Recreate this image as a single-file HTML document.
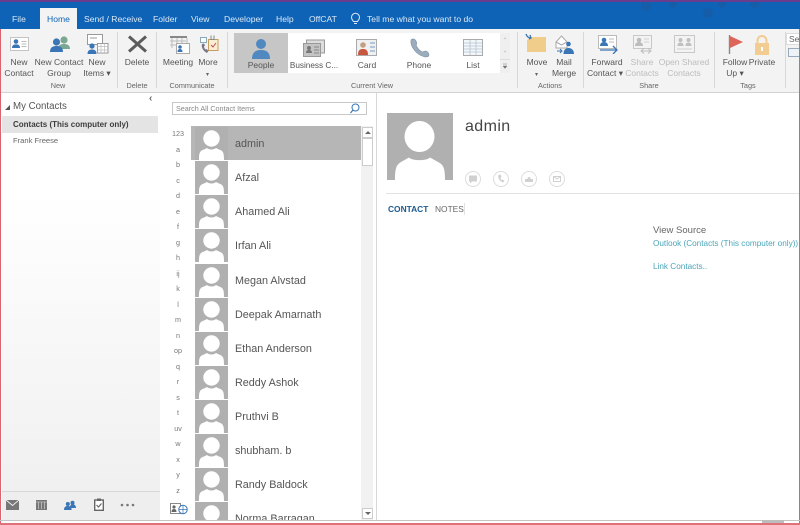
<!DOCTYPE html>
<html><head><meta charset="utf-8">
<style>
html,body{margin:0;padding:0;background:#fff}
#p{position:relative;width:800px;height:525px;overflow:hidden;background:#fff;font-family:"Liberation Sans",sans-serif;color:#555}
#p div,#p svg{position:absolute}
.t{white-space:nowrap;line-height:11px}
.c{white-space:nowrap;line-height:11px;text-align:center;font-size:8.5px;color:#555;transform:translateX(-50%)}
.g{white-space:nowrap;line-height:10px;font-size:7.3px;color:#666;transform:translateX(-50%)}
.tab{white-space:nowrap;font-size:8.6px;color:#dce9f6;line-height:12px;top:13px}
.sep{width:1px;background:#d8d8d8;top:32px;height:56px}
.l{font-size:7.2px;color:#777;line-height:9px;width:20px;text-align:center;left:168px}
.n{left:235px;font-size:10.8px;color:#555;line-height:14px;white-space:nowrap}
.av{left:195px;width:33px;height:33px}
</style></head><body>
<div id="p">
<svg width="0" height="0" style="position:absolute"><defs>
<symbol id="a" viewBox="0 0 33 33"><rect width="33" height="33" fill="#b0b0b0"/><path d="M4 33C4 26 4.500 24 9 22.500L12 21C14 23 19 23 21 21L24 22.500C28.500 24 29 26 29 33Z" fill="#fff"/><ellipse cx="16.500" cy="11.500" rx="8.200" ry="8.200" fill="#fff"/></symbol>
</defs></svg>

<!-- title bar -->
<div style="left:0;top:0;width:800px;height:29px;background:#0f63b6"></div>
<div style="left:0;top:0;width:800px;height:2px;background:#6a3d8f"></div>
<svg style="left:630px;top:2px" width="170" height="16" viewBox="0 0 170 16"><g fill="#155da9"><circle cx="16" cy="4" r="5"/><circle cx="43" cy="2" r="4"/><circle cx="78" cy="11" r="5"/><circle cx="92" cy="2" r="4"/><circle cx="125" cy="1" r="5"/></g></svg>
<div style="left:40px;top:8px;width:37px;height:21px;background:#f3f3f3"></div>
<div class="tab" style="left:12px">File</div>
<div class="tab" style="left:47px;color:#0f63b6">Home</div>
<div class="tab" style="left:84px">Send / Receive</div>
<div class="tab" style="left:153px">Folder</div>
<div class="tab" style="left:191px">View</div>
<div class="tab" style="left:224px">Developer</div>
<div class="tab" style="left:276px">Help</div>
<div class="tab" style="left:309px">OffCAT</div>
<div class="tab" style="left:367px">Tell me what you want to do</div>
<svg style="left:350px;top:12px" width="11" height="14" viewBox="0 0 11 14"><path d="M3.500 9.500C2.500 8.300 1.500 7.300 1.500 5.300a4 4 0 0 1 8 0c0 2-1 3-2 4.200ZM4 11.500h3" fill="none" stroke="#dce9f6" stroke-width="1"/></svg>

<!-- ribbon -->
<div style="left:0;top:29px;width:800px;height:63px;background:#f3f3f3"></div>
<div style="left:0;top:92px;width:800px;height:1px;background:#d2d2d2"></div>
<div class="sep" style="left:117px"></div>
<div class="sep" style="left:156px"></div>
<div class="sep" style="left:227px"></div>
<div class="sep" style="left:517px"></div>
<div class="sep" style="left:583px"></div>
<div class="sep" style="left:714px"></div>
<div class="sep" style="left:785px"></div>

<!-- New Contact -->
<svg style="left:10px;top:37px" width="19" height="14" viewBox="0 0 19 14"><rect x=".5" y=".5" width="18" height="13" fill="#fff" stroke="#c4c4c4"/><circle cx="6" cy="4.500" r="2.300" fill="#3a76b5"/><path d="M2 11c0-3 2-3.600 4-3.600s4 .6 4 3.600Z" fill="#3a76b5"/><path d="M11.500 4.500h5M11.500 7h5M11.500 9.500h5" stroke="#bbb"/></svg>
<div class="c" style="left:19px;top:57px">New<br>Contact</div>
<!-- New Contact Group -->
<svg style="left:49px;top:35px" width="22" height="18" viewBox="0 0 22 18"><circle cx="15" cy="5" r="3.600" fill="#7aa892"/><path d="M9 14c0-4 3-5 6-5s6 1 6 5Z" fill="#7aa892"/><circle cx="7.500" cy="7" r="3.600" fill="#3a76b5"/><path d="M1 17c0-5 3-6 6.500-6s6.500 1 6.500 6Z" fill="#3a76b5"/></svg>
<div class="c" style="left:59px;top:57px">New Contact<br>Group</div>
<!-- New Items -->
<svg style="left:87px;top:34px" width="22" height="20" viewBox="0 0 22 20"><rect x=".5" y=".5" width="15" height="10" fill="#fff" stroke="#999"/><path d="M3 4h7" stroke="#999"/><rect x="10.500" y="9.500" width="10.500" height="9.500" fill="#fff" stroke="#999"/><path d="M10.500 12.500h10.500M10.500 16h10.500M14 9.500v9.500M17.500 9.500v9.500" stroke="#bbb" stroke-width=".7"/><circle cx="5" cy="12" r="2.600" fill="#3a76b5"/><path d="M.5 20c0-3.500 2-4.500 4.500-4.500s4.500 1 4.500 4.500Z" fill="#3a76b5"/></svg>
<div class="c" style="left:97px;top:57px">New<br>Items &#9662;</div>
<div class="g" style="left:58px;top:81px">New</div>
<!-- Delete -->
<svg style="left:127px;top:35px" width="21" height="18" viewBox="0 0 21 18"><path d="M2 1.500L19 16.500M19 1.500L2 16.500" stroke="#5c5c5c" stroke-width="3"/></svg>
<div class="c" style="left:137px;top:57px">Delete</div>
<div class="g" style="left:137px;top:81px">Delete</div>
<!-- Meeting -->
<svg style="left:169px;top:35px" width="21" height="20" viewBox="0 0 21 20"><path d="M1 1h17v2H1Z" fill="#888"/><path d="M1 6h16M1 10h8M3 3v10M8 3v10M13 3v5M18 3v5" stroke="#bbb"/><rect x="7.500" y="8.500" width="13" height="10" fill="#fff" stroke="#aaa"/><circle cx="11" cy="12" r="1.800" fill="#3a76b5"/><path d="M8.500 17c0-2 1-3 2.500-3s2.500 1 2.500 3Z" fill="#3a76b5"/></svg>
<div class="c" style="left:178px;top:57px">Meeting</div>
<!-- More -->
<svg style="left:199px;top:34px" width="21" height="21" viewBox="0 0 21 21"><rect x="9.500" y="5.500" width="9.500" height="11" fill="#fbeed5" stroke="#c89c5a"/><path d="M12 1.500v4h3v-4" fill="none" stroke="#888"/><path d="M12 11l2 2 3-4" stroke="#c0504d" fill="none"/><rect x="1.500" y="3.500" width="6" height="5" fill="#fff" stroke="#8ab"/><path d="M3 10c-1 3 1 7 5 9l1.500-2-2-2-1 .5c-1-1-1.500-2-1.500-3l1-1-1-2Z" fill="#778"/></svg>
<div class="c" style="left:208px;top:57px">More</div>
<div style="left:206px;top:72px;font-size:6px;line-height:6px;color:#666">&#9662;</div>
<div class="g" style="left:192px;top:81px">Communicate</div>

<!-- gallery -->
<div style="left:234px;top:33px;width:275px;height:40px;background:#fff"></div>
<div style="left:234px;top:33px;width:54px;height:40px;background:#c6c6c6"></div>
<div style="left:500px;top:33px;width:10px;height:40px;background:#efefef"></div>
<svg style="left:251px;top:38px" width="20" height="22" viewBox="0 0 20 22"><circle cx="10" cy="6" r="5" fill="#5088c0"/><path d="M1 21c0-7 4-9 9-9s9 2 9 9Z" fill="#5088c0"/></svg>
<div class="c" style="left:261px;top:60px">People</div>
<svg style="left:303px;top:39px" width="22" height="18" viewBox="0 0 22 18"><rect x="3.500" y="1" width="18" height="13" fill="#ddd" stroke="#999"/><rect x=".5" y="4.500" width="17" height="13" fill="#c4c4c4" stroke="#999"/><circle cx="6" cy="9" r="2" fill="#777"/><path d="M3 14c0-2 1-3 3-3s3 1 3 3Z" fill="#777"/><path d="M11 8h5M11 11h5M11 14h5" stroke="#888"/></svg>
<div class="c" style="left:314px;top:60px;font-size:8.200px">Business C...</div>
<svg style="left:356px;top:39px" width="21" height="17" viewBox="0 0 21 17"><rect x=".5" y=".5" width="20" height="16" fill="#f0f0f0" stroke="#aaa"/><circle cx="7" cy="6" r="2.800" fill="#c0a080"/><path d="M2 16c0-5 2-6 5-6s5 1 5 6Z" fill="#c8563e"/><path d="M14 4h5M14 8h5M14 12h5" stroke="#6f9bc8"/></svg>
<div class="c" style="left:367px;top:60px">Card</div>
<svg style="left:409px;top:38px" width="21" height="20" viewBox="0 0 21 20"><path d="M2 2C1 8 7 17 16 19c3 0 4-1 4-2 0-2-1-3-3-4-2 0-3 1-4 1-2-1-5-4-6-7 1-1 1-2 0-4-1-2-3-3-5-1Z" fill="#9bacbc" stroke="#7a8ea0" stroke-width=".6"/></svg>
<div class="c" style="left:419px;top:60px">Phone</div>
<svg style="left:463px;top:39px" width="20" height="17" viewBox="0 0 20 17"><rect x=".5" y=".5" width="19" height="16" fill="#f4f7fa" stroke="#aaa"/><path d="M1 4h18M1 7h18M1 10h18M1 13h18M7 1v15M13 1v15" stroke="#b4c2d0" stroke-width=".8"/></svg>
<div class="c" style="left:473px;top:60px">List</div>
<svg style="left:500px;top:33px" width="10" height="40" viewBox="0 0 10 40"><path d="M4 6l1-1 1 1M4 19l1-1 1 1" stroke="#ccc" fill="none"/><path d="M0 26.500h10" stroke="#ddd"/><path d="M3 31h4M3 33l2 2.500 2-2.500Z" stroke="#777" fill="#777" stroke-width=".5"/></svg>
<div class="g" style="left:372px;top:81px">Current View</div>

<!-- actions -->
<svg style="left:525px;top:33px" width="22" height="20" viewBox="0 0 22 20"><path d="M2 7l5-3h14v15H2Z" fill="#f0cd8a"/><path d="M1 1c1 3 3 4 5 4M4 6l2-1-1-3" stroke="#3a76b5" fill="none" stroke-width="1.300"/></svg>
<div class="c" style="left:537px;top:57px">Move</div>
<div style="left:535px;top:72px;font-size:6px;line-height:6px;color:#666">&#9662;</div>
<svg style="left:555px;top:33px" width="20" height="22" viewBox="0 0 20 22"><path d="M1 9l5.500-6L12 9v6H1Z" fill="#fff" stroke="#aaa"/><path d="M1 9l5.500 3L12 9" fill="none" stroke="#aaa"/><path d="M2 18h5M5 16l2 2-2 2" stroke="#3a76b5" fill="none"/><circle cx="13.500" cy="11" r="2.300" fill="#3a76b5"/><path d="M8.500 21c0-4 2-6 5-6s5.500 2 5.500 6Z" fill="#3a76b5"/></svg>
<div class="c" style="left:564px;top:57px">Mail<br>Merge</div>
<div class="g" style="left:550px;top:81px">Actions</div>

<!-- share -->
<svg style="left:598px;top:35px" width="21" height="19" viewBox="0 0 21 19"><rect x=".5" y=".5" width="18" height="13" fill="#fff" stroke="#bbb"/><circle cx="6" cy="5" r="2.300" fill="#3a76b5"/><path d="M2 11c0-3 2-4 4-4s4 1 4 4Z" fill="#3a76b5"/><path d="M11 4h5M11 7h5" stroke="#bbb"/><path d="M2 15h17M15 11l4 4-4 4" stroke="#3a76b5" fill="none" stroke-width="1.300"/></svg>
<div class="c" style="left:607px;top:57px">Forward</div>
<div class="c" style="left:605px;top:68px">Contact &#9662;</div>
<svg style="left:633px;top:35px" width="20" height="19" viewBox="0 0 20 19"><rect x=".5" y=".5" width="18" height="13" fill="#f3f3f3" stroke="#c8c8c8"/><circle cx="6" cy="5" r="2.300" fill="#bdbdbd"/><path d="M2 11c0-3 2-4 4-4s4 1 4 4Z" fill="#bdbdbd"/><path d="M11 4h5M11 7h5" stroke="#d0d0d0"/><path d="M8 16h10M11 13.500l-3 2.500 3 2.500M15 13.500l3 2.500-3 2.500" stroke="#bdbdbd" fill="none"/></svg>
<div class="c" style="left:642px;top:57px;color:#bcbcbc">Share<br>Contacts</div>
<svg style="left:674px;top:35px" width="21" height="18" viewBox="0 0 21 18"><rect x=".5" y=".5" width="20" height="17" fill="#f3f3f3" stroke="#c8c8c8"/><circle cx="6.500" cy="5" r="2" fill="#c0c0c0"/><circle cx="14.500" cy="5" r="2" fill="#c0c0c0"/><path d="M3.500 11c0-3 1.500-3.500 3-3.500s3 .5 3 3.500ZM11.500 11c0-3 1.500-3.500 3-3.500s3 .5 3 3.500Z" fill="#c0c0c0"/><path d="M3 14h15" stroke="#d0d0d0"/></svg>
<div class="c" style="left:684px;top:57px;color:#bcbcbc">Open Shared<br>Contacts</div>
<div class="g" style="left:649px;top:81px">Share</div>

<!-- tags -->
<svg style="left:728px;top:35px" width="16" height="19" viewBox="0 0 16 19"><path d="M1.500 0v19" stroke="#888" stroke-width="1.400"/><path d="M2 1l13 6-13 6Z" fill="#dc6458"/></svg>
<div class="c" style="left:735px;top:57px">Follow<br>Up &#9662;</div>
<svg style="left:754px;top:35px" width="16" height="20" viewBox="0 0 16 20"><path d="M3.500 9V5.500a4.500 4.500 0 0 1 9 0V9" fill="none" stroke="#f2cc90" stroke-width="2"/><rect x="1" y="8" width="14" height="12" fill="#f2cc90"/><path d="M8 12v4" stroke="#fff" stroke-width="2"/></svg>
<div class="c" style="left:762px;top:57px">Private</div>
<div class="g" style="left:748px;top:81px">Tags</div>
<div style="left:786px;top:33px;width:14px;height:12px;background:#fff;border:1px solid #ddd;border-right:0;box-sizing:border-box"></div>
<div class="t" style="left:789px;top:34px;font-size:8.500px;color:#666">Sea</div>
<div style="left:788px;top:48px;width:12px;height:9px;border:1px solid #9ab;border-right:0;box-sizing:border-box;background:#eef3f8"></div>

<!-- nav pane -->
<div style="left:2px;top:93px;width:158px;height:398px;background:linear-gradient(#fff 0,#fff 25%,#f0f0f0 100%)"></div>
<div style="left:2px;top:491px;width:158px;height:29px;background:#eeeeee;border-top:1px solid #d8d8d8;box-sizing:border-box"></div>
<div class="t" style="left:149px;top:93px;font-size:10px;color:#666;font-weight:bold">&#8249;</div>
<div style="left:5px;top:105px;width:0;height:0;border-left:5px solid transparent;border-bottom:5px solid #555"></div>
<div class="t" style="left:13px;top:101px;font-size:9.700px;color:#555;line-height:12px">My Contacts</div>
<div style="left:2px;top:116px;width:156px;height:17px;background:#e4e4e4"></div>
<div class="t" style="left:13px;top:119px;font-size:8px;font-weight:bold;color:#3c3c3c">Contacts (This computer only)</div>
<div class="t" style="left:13px;top:135px;font-size:7.600px;color:#666">Frank Freese</div>

<svg style="left:6px;top:500px" width="13" height="10" viewBox="0 0 13 10"><rect width="13" height="10" fill="#777"/><path d="M0 0l6.500 5.500L13 0" fill="none" stroke="#eee"/></svg>
<svg style="left:36px;top:500px" width="11" height="10" viewBox="0 0 11 10"><rect width="11" height="10" fill="#777"/><path d="M2.500 2v7M5.500 2v7M8.500 2v7M0 2h11" stroke="#ddd" stroke-width=".6"/></svg>
<svg style="left:64px;top:500px" width="12" height="10" viewBox="0 0 12 10"><circle cx="8.500" cy="2.800" r="2" fill="#3a76b5"/><circle cx="3.800" cy="4" r="2" fill="#3a76b5"/><path d="M6 8c0-3 1-3.800 2.500-3.800S12 5 12 8ZM0 10c0-3 1.500-4 3.800-4s3.800 1 3.800 4Z" fill="#3a76b5"/></svg>
<svg style="left:94px;top:498px" width="10" height="13" viewBox="0 0 10 13"><rect x=".7" y="2" width="8.600" height="10.300" fill="#fff" stroke="#666" stroke-width="1.400"/><rect x="3" y=".5" width="4" height="2.500" fill="#666"/><path d="M2.500 7l2 2 3-3.500" stroke="#666" fill="none" stroke-width="1.200"/></svg>
<svg style="left:120px;top:503px" width="15" height="4" viewBox="0 0 15 4"><circle cx="2" cy="2" r="1.300" fill="#777"/><circle cx="7.500" cy="2" r="1.300" fill="#777"/><circle cx="13" cy="2" r="1.300" fill="#777"/></svg>

<!-- search -->
<div style="left:172px;top:102px;width:195px;height:13px;border:1px solid #c8c8c8;box-sizing:border-box;background:#fff"></div>
<div class="t" style="left:176px;top:103px;font-size:7.200px;color:#888">Search All Contact Items</div>
<svg style="left:349px;top:103px" width="11" height="11" viewBox="0 0 11 11"><circle cx="6.500" cy="4.500" r="3.500" fill="none" stroke="#3a76b5"/><path d="M4 7L1.500 10" stroke="#3a76b5" stroke-width="1.200"/></svg>

<!-- index -->
<div class="l" style="top:129px">123</div><div class="l" style="top:145px">a</div><div class="l" style="top:160px">b</div><div class="l" style="top:176px">c</div><div class="l" style="top:191px">d</div><div class="l" style="top:207px">e</div><div class="l" style="top:222px">f</div><div class="l" style="top:238px">g</div><div class="l" style="top:253px">h</div><div class="l" style="top:269px">ij</div><div class="l" style="top:284px">k</div><div class="l" style="top:300px">l</div><div class="l" style="top:315px">m</div><div class="l" style="top:331px">n</div><div class="l" style="top:346px">op</div><div class="l" style="top:362px">q</div><div class="l" style="top:377px">r</div><div class="l" style="top:393px">s</div><div class="l" style="top:408px">t</div><div class="l" style="top:424px">uv</div><div class="l" style="top:439px">w</div><div class="l" style="top:455px">x</div><div class="l" style="top:470px">y</div><div class="l" style="top:486px">z</div>
<svg style="left:170px;top:503px" width="18" height="12" viewBox="0 0 18 12"><rect x=".5" y=".5" width="10" height="10" fill="#fff" stroke="#888"/><circle cx="4" cy="4" r="1.600" fill="#666"/><path d="M1.500 9c0-2 1-3 2.500-3s2.500 1 2.500 3Z" fill="#666"/><circle cx="13" cy="6.500" r="4.200" fill="#fff" stroke="#3a76b5"/><path d="M9 6.500h8M13 2.500v8" stroke="#3a76b5" stroke-width=".7"/></svg>

<!-- list -->
<div style="left:191px;top:126px;width:170px;height:34px;background:#b6b6b6"></div>
<svg class="av" style="top:127px"><use href="#a"/></svg><div class="n" style="top:137px">admin</div>
<svg class="av" style="top:161px"><use href="#a"/></svg><div class="n" style="top:171px">Afzal</div>
<svg class="av" style="top:195px"><use href="#a"/></svg><div class="n" style="top:205px">Ahamed Ali</div>
<svg class="av" style="top:229px"><use href="#a"/></svg><div class="n" style="top:239px">Irfan Ali</div>
<svg class="av" style="top:264px"><use href="#a"/></svg><div class="n" style="top:274px">Megan Alvstad</div>
<svg class="av" style="top:298px"><use href="#a"/></svg><div class="n" style="top:308px">Deepak Amarnath</div>
<svg class="av" style="top:332px"><use href="#a"/></svg><div class="n" style="top:342px">Ethan Anderson</div>
<svg class="av" style="top:366px"><use href="#a"/></svg><div class="n" style="top:376px">Reddy Ashok</div>
<svg class="av" style="top:400px"><use href="#a"/></svg><div class="n" style="top:410px">Pruthvi B</div>
<svg class="av" style="top:434px"><use href="#a"/></svg><div class="n" style="top:444px">shubham. b</div>
<svg class="av" style="top:468px"><use href="#a"/></svg><div class="n" style="top:478px">Randy Baldock</div>
<div style="left:195px;top:502px;width:33px;height:18px;overflow:hidden"><svg width="33" height="33" style="left:0;top:0"><use href="#a"/></svg></div>
<div style="left:235px;top:512px;width:120px;height:8px;overflow:hidden"><div class="n" style="left:0;top:0">Norma Barragan</div></div>

<!-- scrollbar -->
<div style="left:361px;top:126px;width:12px;height:394px;background:#f1f1f1"></div>
<div style="left:362px;top:127px;width:11px;height:11px;background:#fff;border:1px solid #ccc;box-sizing:border-box"></div>
<div style="left:362px;top:138px;width:11px;height:28px;background:#fff;border:1px solid #ccc;box-sizing:border-box"></div>
<div style="left:362px;top:508px;width:11px;height:11px;background:#fff;border:1px solid #ccc;box-sizing:border-box"></div>
<div style="left:365px;top:131px;width:0;height:0;border:3px solid transparent;border-top:0;border-bottom:3px solid #666"></div>
<div style="left:365px;top:512px;width:0;height:0;border:3px solid transparent;border-bottom:0;border-top:3px solid #666"></div>
<div style="left:376px;top:93px;width:1px;height:427px;background:#d8d8d8"></div>

<!-- detail -->
<svg style="left:387px;top:113px" width="66" height="67" viewBox="0 0 66 67"><rect width="66" height="67" fill="#b0b0b0"/><path d="M8 67C8 56 9 52 14 49L22 44.500C25 48 40 48 43 44.500L51 49C57 52 58 56 58 67Z" fill="#fff"/><ellipse cx="32.500" cy="23.500" rx="15" ry="15.500" fill="#fff"/></svg>
<div class="t" style="left:465px;top:118px;font-size:16px;line-height:18px;color:#444;letter-spacing:.4px">admin</div>
<svg style="left:464px;top:170px" width="104" height="18" viewBox="0 0 104 18"><g fill="none" stroke="#dcdcdc"><circle cx="9" cy="9" r="7.500"/><circle cx="37" cy="9" r="7.500"/><circle cx="65" cy="9" r="7.500"/><circle cx="93" cy="9" r="7.500"/></g><path d="M5 5.500h8v6H8l-2 2v-2H5Z" fill="#d0d0d0"/><path d="M34.500 5c-1 3 1 6 4.500 7.500l1.500-1.500-2-1.500-1 .5c-.7-.7-1-1.300-1-2l1-1-1-2.500Z" fill="#d0d0d0"/><path d="M61 12V9h8v3ZM63.500 8.500a1.500 1.500 0 0 1 3 0v1h-3Z" fill="#d0d0d0"/><path d="M89.500 6.500h7v5h-7Z" fill="none" stroke="#d0d0d0"/><path d="M89.500 6.500l3.500 2.500 3.500-2.500" fill="none" stroke="#d0d0d0"/></svg>
<div style="left:386px;top:193px;width:413px;height:1px;background:#e2e2e2"></div>
<div class="t" style="left:388px;top:204px;font-size:8.400px;font-weight:bold;color:#1c5a8f">CONTACT</div>
<div class="t" style="left:435px;top:204px;font-size:8.400px;color:#666">NOTES</div>
<div style="left:464px;top:203px;width:1px;height:12px;background:#e2e2e2"></div>
<div class="t" style="left:653px;top:225px;font-size:9.500px;color:#666">View Source</div>
<div class="t" style="left:653px;top:238px;font-size:8.200px;color:#4ba5b8">Outlook (Contacts (This computer only))</div>
<div class="t" style="left:653px;top:261px;font-size:8.200px;color:#4ba5b8">Link Contacts..</div>

<!-- frame -->
<div style="left:0;top:93px;width:2px;height:432px;background:#fff"></div>
<div style="left:0;top:29px;width:1px;height:496px;background:#d9646e"></div>
<div style="left:799px;top:29px;width:1px;height:496px;background:#d9646e"></div>
<div style="left:0;top:520px;width:800px;height:1px;background:#c4c4c4"></div>
<div style="left:0;top:523px;width:800px;height:2px;background:#e0707a"></div>
<div style="left:762px;top:520px;width:22px;height:3px;background:#bdbdbd"></div>
</div>
</body></html>
